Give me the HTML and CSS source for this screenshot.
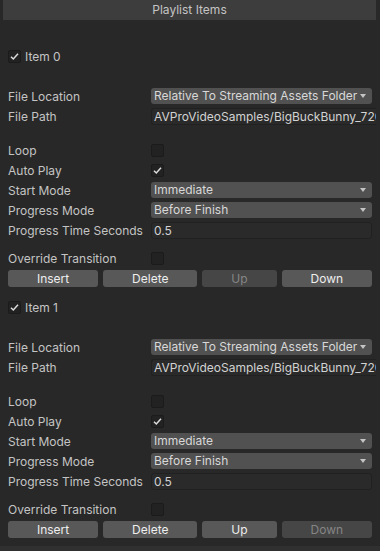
FILE: index.html
```html
<!DOCTYPE html>
<html lang="en">
<head>
    <meta charset="UTF-8">
    <title>Playlist Items</title>
    <link rel="stylesheet" href="styles.css">
</head>
<body>
<div class="inspector">
    <div class="header">Playlist Items</div>

    <!-- item 0 -->
    <div class="item first">
        <div class="item-head">
            <span class="check">
                <svg width="11" height="11" viewBox="0 0 11 11"><polyline points="2,5.8 4.3,8 9,2.8" /></svg>
            </span>
            <span>Item 0</span>
        </div>
        <div class="group group-file">
            <div class="row">
                <span class="label">File Location</span>
                <div class="popup">Relative To Streaming Assets Folder<span class="arrow"></span></div>
            </div>
            <div class="row">
                <span class="label">File Path</span>
                <div class="field wide">AVProVideoSamples/BigBuckBunny_720p30.mp4</div>
            </div>
        </div>
        <div class="group group-play">
            <div class="row">
                <span class="label">Loop</span>
                <span class="check"></span>
            </div>
            <div class="row">
                <span class="label">Auto Play</span>
                <span class="check">
                    <svg width="11" height="11" viewBox="0 0 11 11"><polyline points="2,5.8 4.3,8 9,2.8" /></svg>
                </span>
            </div>
            <div class="row">
                <span class="label">Start Mode</span>
                <div class="popup">Immediate<span class="arrow"></span></div>
            </div>
            <div class="row">
                <span class="label">Progress Mode</span>
                <div class="popup">Before Finish<span class="arrow"></span></div>
            </div>
            <div class="row">
                <span class="label">Progress Time Seconds</span>
                <div class="field">0.5</div>
            </div>
        </div>
        <div class="group group-end">
            <div class="row">
                <span class="label">Override Transition</span>
                <span class="check"></span>
            </div>
            <div class="buttons">
                <div class="btn">Insert</div>
                <div class="btn">Delete</div>
                <div class="btn disabled">Up</div>
                <div class="btn">Down</div>
            </div>
        </div>
    </div>

    <!-- item 1 -->
    <div class="item">
        <div class="item-head">
            <span class="check">
                <svg width="11" height="11" viewBox="0 0 11 11"><polyline points="2,5.8 4.3,8 9,2.8" /></svg>
            </span>
            <span>Item 1</span>
        </div>
        <div class="group group-file">
            <div class="row">
                <span class="label">File Location</span>
                <div class="popup">Relative To Streaming Assets Folder<span class="arrow"></span></div>
            </div>
            <div class="row">
                <span class="label">File Path</span>
                <div class="field wide">AVProVideoSamples/BigBuckBunny_720p30.mp4</div>
            </div>
        </div>
        <div class="group group-play">
            <div class="row">
                <span class="label">Loop</span>
                <span class="check"></span>
            </div>
            <div class="row">
                <span class="label">Auto Play</span>
                <span class="check">
                    <svg width="11" height="11" viewBox="0 0 11 11"><polyline points="2,5.8 4.3,8 9,2.8" /></svg>
                </span>
            </div>
            <div class="row">
                <span class="label">Start Mode</span>
                <div class="popup">Immediate<span class="arrow"></span></div>
            </div>
            <div class="row">
                <span class="label">Progress Mode</span>
                <div class="popup">Before Finish<span class="arrow"></span></div>
            </div>
            <div class="row">
                <span class="label">Progress Time Seconds</span>
                <div class="field">0.5</div>
            </div>
        </div>
        <div class="group group-end">
            <div class="row">
                <span class="label">Override Transition</span>
                <span class="check"></span>
            </div>
            <div class="buttons">
                <div class="btn">Insert</div>
                <div class="btn">Delete</div>
                <div class="btn">Up</div>
                <div class="btn disabled">Down</div>
            </div>
        </div>
    </div>

    <div class="footer"></div>
</div>
</body>
</html>
```

FILE: styles.css
```css
*{
    padding: 0;
    margin: 0;
    box-sizing: border-box;
}

html, body{
    background: #282828;
    width: 380px;
    height: 551px;
    overflow: hidden;
}

.inspector{
    font-family: Inter, "Noto Sans", sans-serif;
    font-size: 12px;
    color: #c4c4c4;
}

.header{
    height: 20px;
    line-height: 20px;
    margin: 0 4px 0 3px;
    background: #3d3d3d;
    text-align: center;
}

.item{
    padding: 0 8px;
    margin-top: 9px;
}

.item.first{
    margin-top: 26px;
}

.item-head{
    height: 20px;
    display: flex;
    align-items: center;
    gap: 4px;
}

.group-file{ margin-top: 20px; }
.group-play{ margin-top: 14px; }
.group-end{ margin-top: 8px; }

.row{
    height: 20px;
    display: flex;
    align-items: center;
}

.label{
    width: 143px;
    flex: none;
    white-space: nowrap;
}

/* checkbox */
.check{
    width: 13px;
    height: 13px;
    flex: none;
    background: #222222;
    border: 1px solid #1b1b1b;
    border-radius: 2px;
    display: flex;
    align-items: center;
    justify-content: center;
}

.check svg polyline{
    fill: none;
    stroke: #dcdcdc;
    stroke-width: 1.5;
}

/* dropdown */
.popup{
    flex: 1;
    height: 16px;
    line-height: 16px;
    background: #515151;
    border-radius: 3px;
    padding: 0 4px 0 3px;
    color: #d8d8d8;
    display: flex;
    align-items: center;
    justify-content: space-between;
    white-space: nowrap;
}

.arrow{
    width: 0;
    height: 0;
    border-left: 3.5px solid transparent;
    border-right: 3.5px solid transparent;
    border-top: 4px solid #c4c4c4;
    margin-right: 2px;
}

/* text field */
.field{
    flex: 1;
    height: 17px;
    line-height: 15px;
    background: #2a2a2a;
    border: 1px solid #212121;
    border-radius: 3px;
    padding: 0 2px;
    color: #d2d2d2;
    white-space: nowrap;
    overflow: hidden;
}

.field.wide{
    margin-right: -4px;
    border-right: none;
    border-radius: 3px 0 0 3px;
}

.buttons{
    height: 20px;
    display: flex;
    align-items: center;
    gap: 5px;
}

.btn{
    flex: 1 1 auto;
    height: 17px;
    line-height: 17px;
    background: #585858;
    border-radius: 3px;
    text-align: center;
    color: #eeeeee;
}

.btn.disabled{
    background: #464646;
    color: #858585;
}

.footer{
    margin-top: 7px;
    height: 10px;
    background: #303030;
}
```
